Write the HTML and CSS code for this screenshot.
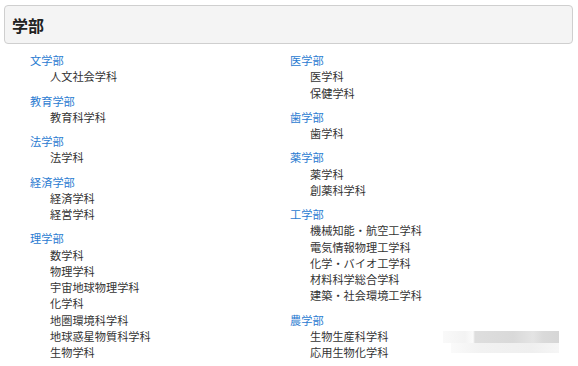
FILE: index.html
```html
<!DOCTYPE html>
<html lang="ja">
<head>
<meta charset="utf-8">
<title>学部</title>
<link rel="stylesheet" href="styles.css">
</head>
<body>
<div class="panel">
    <h2 class="panel-title">学部</h2>
</div>

<div class="faculties">
    <ul class="col">
        <li><a href="javascript:void(0);">文学部</a>
            <ul><li>人文社会学科</li></ul>
        </li>
        <li><a href="javascript:void(0);">教育学部</a>
            <ul><li>教育科学科</li></ul>
        </li>
        <li><a href="javascript:void(0);">法学部</a>
            <ul><li>法学科</li></ul>
        </li>
        <li><a href="javascript:void(0);">経済学部</a>
            <ul>
                <li>経済学科</li>
                <li>経営学科</li>
            </ul>
        </li>
        <li><a href="javascript:void(0);">理学部</a>
            <ul>
                <li>数学科</li>
                <li>物理学科</li>
                <li>宇宙地球物理学科</li>
                <li>化学科</li>
                <li>地圏環境科学科</li>
                <li>地球惑星物質科学科</li>
                <li>生物学科</li>
            </ul>
        </li>
    </ul>
    <ul class="col">
        <li><a href="javascript:void(0);">医学部</a>
            <ul>
                <li>医学科</li>
                <li>保健学科</li>
            </ul>
        </li>
        <li><a href="javascript:void(0);">歯学部</a>
            <ul><li>歯学科</li></ul>
        </li>
        <li><a href="javascript:void(0);">薬学部</a>
            <ul>
                <li>薬学科</li>
                <li>創薬科学科</li>
            </ul>
        </li>
        <li><a href="javascript:void(0);">工学部</a>
            <ul>
                <li>機械知能・航空工学科</li>
                <li>電気情報物理工学科</li>
                <li>化学・バイオ工学科</li>
                <li>材料科学総合学科</li>
                <li>建築・社会環境工学科</li>
            </ul>
        </li>
        <li><a href="javascript:void(0);">農学部</a>
            <ul>
                <li>生物生産科学科</li>
                <li>応用生物化学科</li>
            </ul>
        </li>
    </ul>
</div>

<div class="blur">
    <div class="blur-top"></div>
    <div class="blur-bottom"></div>
</div>
</body>
</html>
```

FILE: styles.css
```css
body, ul, li, h2 {margin:0; padding:0;}
body {
    color:#333;
    font:11.2px/16.25px "Noto Sans CJK JP", "Noto Sans", sans-serif;
    background-color:#fff;
    padding:5px 5px 0 4px;
    position:relative;
    height:361px;
    overflow:hidden;
}
ul {list-style:none;}
a {color:#2a7bd1; text-decoration:none;}

.panel {
    height:37px;
    background-color:#f4f4f4;
    border:1px solid #cfcfcf;
    border-radius:4px;
    display:flex;
    align-items:center;
    padding-left:7px;
}
.panel-title {font-size:16px; font-weight:bold; color:#222; line-height:20px;}

.faculties {
    display:grid;
    grid-template-columns:260px 1fr;
    padding:8px 0 0 26px;
}
.col > li {margin-bottom:8px;}
.col > li > a {display:block;}
.col ul {padding-left:20px;}

.blur {position:absolute; left:443px; top:331px; width:116px;}
.blur-top {
    height:12px;
    background:linear-gradient(to right, #f9f9f9 0, #f3f3f3 22px, #fbfbfb 30px, #dedede 32px, #d9d9d9 70px, #e4e4e4 90px, #dadada 100px, #d6d6d6 116px);
}
.blur-bottom {
    height:10px;
    margin-left:8px;
    background:linear-gradient(to right, #fafafa 0, #f2f2f2 30px, #efefef 80px, #f6f6f6 108px);
}
```
